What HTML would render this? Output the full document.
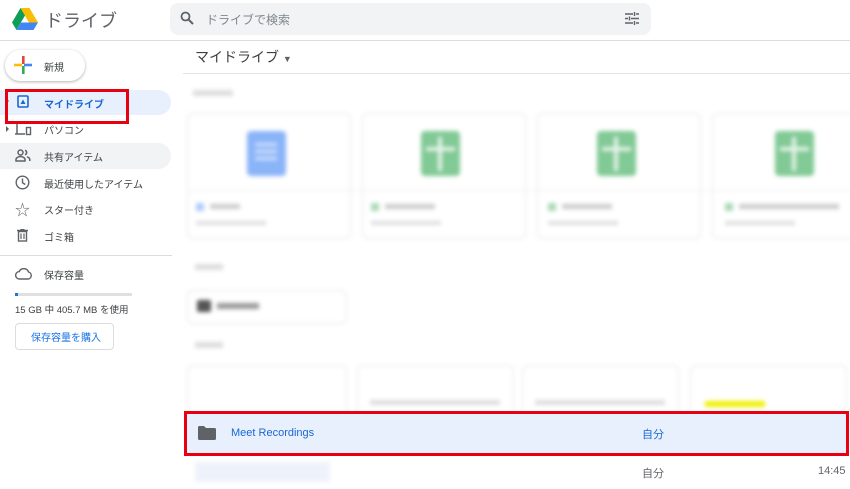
<!DOCTYPE html><html><head><meta charset="utf-8"><style>
*{margin:0;padding:0;box-sizing:border-box}
body{width:850px;height:489px;overflow:hidden;background:#fff;font-family:"Liberation Sans","Noto Sans CJK JP",sans-serif;position:relative;color:#3c4043}
.a{position:absolute}
.t{font-size:10px;color:#3c4043;white-space:nowrap}
.bl{filter:blur(2px)}
.card{position:absolute;border:1px solid #e6e6e6;border-radius:6px;background:#fff}
.g{position:absolute;width:39px;height:45px;background:#81c995;border-radius:4px}
.g::before{content:"";position:absolute;left:17px;top:6px;width:4px;height:34px;background:#e6f4ea}
.g::after{content:"";position:absolute;left:5px;top:16px;width:29px;height:4px;background:#e6f4ea}
</style></head><body>
<svg class="a" style="left:12px;top:8px" width="26" height="22" viewBox="0 0 26 22"><path d="M8.5 0h9l8.5 14.5h-9z" fill="#fbbc04"/><path d="M8.5 0L0 14.5l4.5 7.5 8.5-14.5z" fill="#0f9d58"/><path d="M4.5 22h17l4.5-7.5H9z" fill="#4285f4"/></svg>
<div class="a" style="left:45px;top:7px;font-size:18px;color:#5f6368">ドライブ</div>
<div class="a" style="left:170px;top:3px;width:481px;height:32px;background:#f1f3f4;border-radius:8px"></div>
<svg class="a" style="left:180px;top:11px" width="14" height="14" viewBox="0 0 14 14"><circle cx="5.5" cy="5.5" r="4" fill="none" stroke="#5f6368" stroke-width="1.8"/><path d="M8.5 8.5L13 13" stroke="#5f6368" stroke-width="2"/></svg>
<div class="a" style="left:206px;top:11px;font-size:12px;color:#80868b">ドライブで検索</div>
<svg class="a" style="left:625px;top:12px" width="14" height="13" viewBox="0 0 14 13"><path d="M0 2h8M11 2h3M0 6.5h3M6 6.5h8M0 11h8M11 11h3M9.5 0v4M4.5 4.5v4M9.5 9v4" stroke="#5f6368" stroke-width="1.4"/></svg>
<div class="a" style="left:0;top:40px;width:850px;height:1px;background:#dadce0"></div>
<div class="a" style="left:5px;top:50px;width:80px;height:31px;border-radius:16px;box-shadow:0 1px 3px rgba(0,0,0,.3);background:#fff"></div>
<svg class="a" style="left:14px;top:56px" width="18" height="18" viewBox="0 0 18 18"><rect x="8" y="0" width="2.6" height="8" fill="#ea4335"/><rect x="8" y="10" width="2.6" height="8" fill="#34a853"/><rect x="0" y="7.7" width="8" height="2.6" fill="#fbbc04"/><rect x="10" y="7.7" width="8" height="2.6" fill="#4285f4"/></svg>
<div class="a t" style="left:44px;top:59px">新規</div>
<div class="a" style="left:0;top:90px;width:171px;height:25px;background:#e8f0fe;border-radius:0 13px 13px 0"></div>
<div class="a" style="left:6px;top:98px;border-left:3px solid #5f6368;border-top:3px solid transparent;border-bottom:3px solid transparent"></div>
<svg class="a" style="left:17px;top:95px" width="12" height="13" viewBox="0 0 12 13"><rect x="1" y="1" width="10" height="11" rx="1" fill="none" stroke="#1967d2" stroke-width="1.6"/><path d="M3.5 9h5L6 4.5z" fill="#1967d2"/></svg>
<div class="a t" style="left:44px;top:96px;color:#1967d2;font-weight:bold">マイドライブ</div>
<div class="a" style="left:5px;top:89px;width:124px;height:35px;border:3px solid #e60012"></div>
<div class="a" style="left:6px;top:126px;border-left:3px solid #5f6368;border-top:3px solid transparent;border-bottom:3px solid transparent"></div>
<svg class="a" style="left:14px;top:123px" width="18" height="13" viewBox="0 0 18 13"><path d="M3 1v10M1 11h10" stroke="#5f6368" stroke-width="1.5"/><rect x="12.5" y="4.5" width="4" height="7" fill="none" stroke="#5f6368" stroke-width="1.4"/></svg>
<div class="a t" style="left:44px;top:122px">パソコン</div>
<div class="a" style="left:0;top:143px;width:171px;height:26px;background:#f1f3f4;border-radius:0 13px 13px 0"></div>
<svg class="a" style="left:15px;top:149px" width="16" height="13" viewBox="0 0 16 13"><circle cx="5.5" cy="3.5" r="2.5" fill="none" stroke="#5f6368" stroke-width="1.5"/><path d="M1 12v-1.5c0-2 3-3 4.5-3s4.5 1 4.5 3V12z" fill="none" stroke="#5f6368" stroke-width="1.5"/><path d="M10 1.3a2.3 2.3 0 010 4.4M12 7.8c1.5.5 2.8 1.3 2.8 2.8V12" fill="none" stroke="#5f6368" stroke-width="1.5"/></svg>
<div class="a t" style="left:44px;top:149px">共有アイテム</div>
<svg class="a" style="left:15px;top:175px" width="15" height="15" viewBox="0 0 15 15"><circle cx="7.5" cy="7.5" r="6.3" fill="none" stroke="#5f6368" stroke-width="1.4"/><path d="M7.5 3.5v4.2l2.8 1.8" fill="none" stroke="#5f6368" stroke-width="1.4"/></svg>
<div class="a t" style="left:44px;top:176px">最近使用したアイテム</div>
<div class="a" style="left:15px;top:199px;font-size:15px;color:#5f6368">☆</div>
<div class="a t" style="left:44px;top:202px">スター付き</div>
<svg class="a" style="left:17px;top:229px" width="11" height="13" viewBox="0 0 11 13"><path d="M0 1.5h11M3.5 0h4" stroke="#5f6368" stroke-width="1.4"/><rect x="1.5" y="2.5" width="8" height="9.5" fill="none" stroke="#5f6368" stroke-width="1.4"/><path d="M4 4.5v5.5M7 4.5v5.5" stroke="#5f6368" stroke-width="1.2"/></svg>
<div class="a t" style="left:44px;top:229px">ゴミ箱</div>
<div class="a" style="left:0;top:255px;width:172px;height:1px;background:#dadce0"></div>
<svg class="a" style="left:15px;top:268px" width="18" height="12" viewBox="0 0 18 12"><path d="M4.5 11a3.7 3.7 0 01-.3-7.4A5 5 0 0113.5 4a3.6 3.6 0 010 7z" fill="none" stroke="#5f6368" stroke-width="1.4"/></svg>
<div class="a t" style="left:44px;top:267px">保存容量</div>
<div class="a" style="left:15px;top:293px;width:117px;height:3px;background:#e0e0e0"></div>
<div class="a" style="left:15px;top:293px;width:3px;height:3px;background:#1a73e8"></div>
<div class="a t" style="left:15px;top:302px;font-size:9.5px">15 GB 中 405.7 MB を使用</div>
<div class="a" style="left:15px;top:323px;width:99px;height:27px;border:1px solid #dadce0;border-radius:4px"></div>
<div class="a t" style="left:31px;top:329px;color:#1a73e8">保存容量を購入</div>
<div class="a" style="left:195px;top:47px;font-size:14px;color:#3c4043">マイドライブ <span style="font-size:9px;color:#5f6368">▼</span></div>
<div class="a" style="left:183px;top:73px;width:667px;height:1px;background:#e3e3e3"></div>
<div class="bl">
<div class="a" style="left:193px;top:90px;width:40px;height:6px;background:#ddd"></div>
<div class="card" style="left:187px;top:113px;width:164px;height:126px"></div>
<div class="card" style="left:362px;top:113px;width:164px;height:126px"></div>
<div class="card" style="left:537px;top:113px;width:164px;height:126px"></div>
<div class="card" style="left:712px;top:113px;width:150px;height:126px"></div>
<div class="a" style="left:187px;top:190px;width:663px;height:1px;background:#eee"></div>
<div class="a" style="left:247px;top:131px;width:39px;height:45px;background:#8ab4f8;border-radius:4px"></div>
<div class="a" style="left:255px;top:143px;width:22px;height:3px;background:#d6e4fc;box-shadow:0 7px #d6e4fc,0 14px #d6e4fc"></div>
<div class="g" style="left:421px;top:131px"></div>
<div class="g" style="left:597px;top:131px"></div>
<div class="g" style="left:775px;top:131px"></div>
<div class="a" style="left:196px;top:203px;width:8px;height:8px;background:#aecbfa"></div>
<div class="a" style="left:210px;top:204px;width:30px;height:5px;background:#ccc"></div>
<div class="a" style="left:196px;top:221px;width:70px;height:4px;background:#ddd"></div>
<div class="a" style="left:371px;top:203px;width:8px;height:8px;background:#a8dab5"></div>
<div class="a" style="left:385px;top:204px;width:50px;height:5px;background:#ccc"></div>
<div class="a" style="left:371px;top:221px;width:70px;height:4px;background:#ddd"></div>
<div class="a" style="left:548px;top:203px;width:8px;height:8px;background:#a8dab5"></div>
<div class="a" style="left:562px;top:204px;width:50px;height:5px;background:#ccc"></div>
<div class="a" style="left:548px;top:221px;width:70px;height:4px;background:#ddd"></div>
<div class="a" style="left:725px;top:203px;width:8px;height:8px;background:#a8dab5"></div>
<div class="a" style="left:739px;top:204px;width:100px;height:5px;background:#ccc"></div>
<div class="a" style="left:725px;top:221px;width:70px;height:4px;background:#ddd"></div>
<div class="a" style="left:195px;top:264px;width:28px;height:6px;background:#ddd"></div>
<div class="card" style="left:187px;top:290px;width:160px;height:34px"></div>
<div class="a" style="left:197px;top:300px;width:14px;height:12px;background:#555;border-radius:2px"></div>
<div class="a" style="left:217px;top:303px;width:42px;height:6px;background:#999"></div>
<div class="a" style="left:195px;top:342px;width:28px;height:6px;background:#ddd"></div>
<div class="card" style="left:187px;top:365px;width:160px;height:60px"></div>
<div class="card" style="left:357px;top:365px;width:157px;height:60px"></div>
<div class="card" style="left:522px;top:365px;width:157px;height:60px"></div>
<div class="card" style="left:690px;top:365px;width:157px;height:60px"></div>
<div class="a" style="left:370px;top:400px;width:130px;height:5px;background:#ddd"></div>
<div class="a" style="left:535px;top:400px;width:130px;height:5px;background:#ddd"></div>
<div class="a" style="left:705px;top:401px;width:60px;height:6px;background:#f0f000"></div>
<div class="a" style="left:195px;top:462px;width:135px;height:20px;background:#eef2fa"></div>
</div>
<div class="a" style="left:187px;top:414px;width:659px;height:39px;background:#e8f0fe"></div>
<div class="a" style="left:184px;top:411px;width:665px;height:45px;border:3px solid #e60012"></div>
<svg class="a" style="left:198px;top:426px" width="18" height="14" viewBox="0 0 18 14"><path d="M0 1.5A1.5 1.5 0 011.5 0H6l2 2h8.5A1.5 1.5 0 0118 3.5v9a1.5 1.5 0 01-1.5 1.5h-15A1.5 1.5 0 010 12.5z" fill="#5f6368"/></svg>
<div class="a" style="left:231px;top:427px;font-size:11px;color:#1967d2">Meet Recordings</div>
<div class="a" style="left:642px;top:426px;font-size:11px;color:#1967d2">自分</div>
<div class="a" style="left:642px;top:465px;font-size:11px;color:#5f6368">自分</div>
<div class="a" style="left:818px;top:465px;font-size:11px;color:#5f6368">14:45</div>
</body></html>
